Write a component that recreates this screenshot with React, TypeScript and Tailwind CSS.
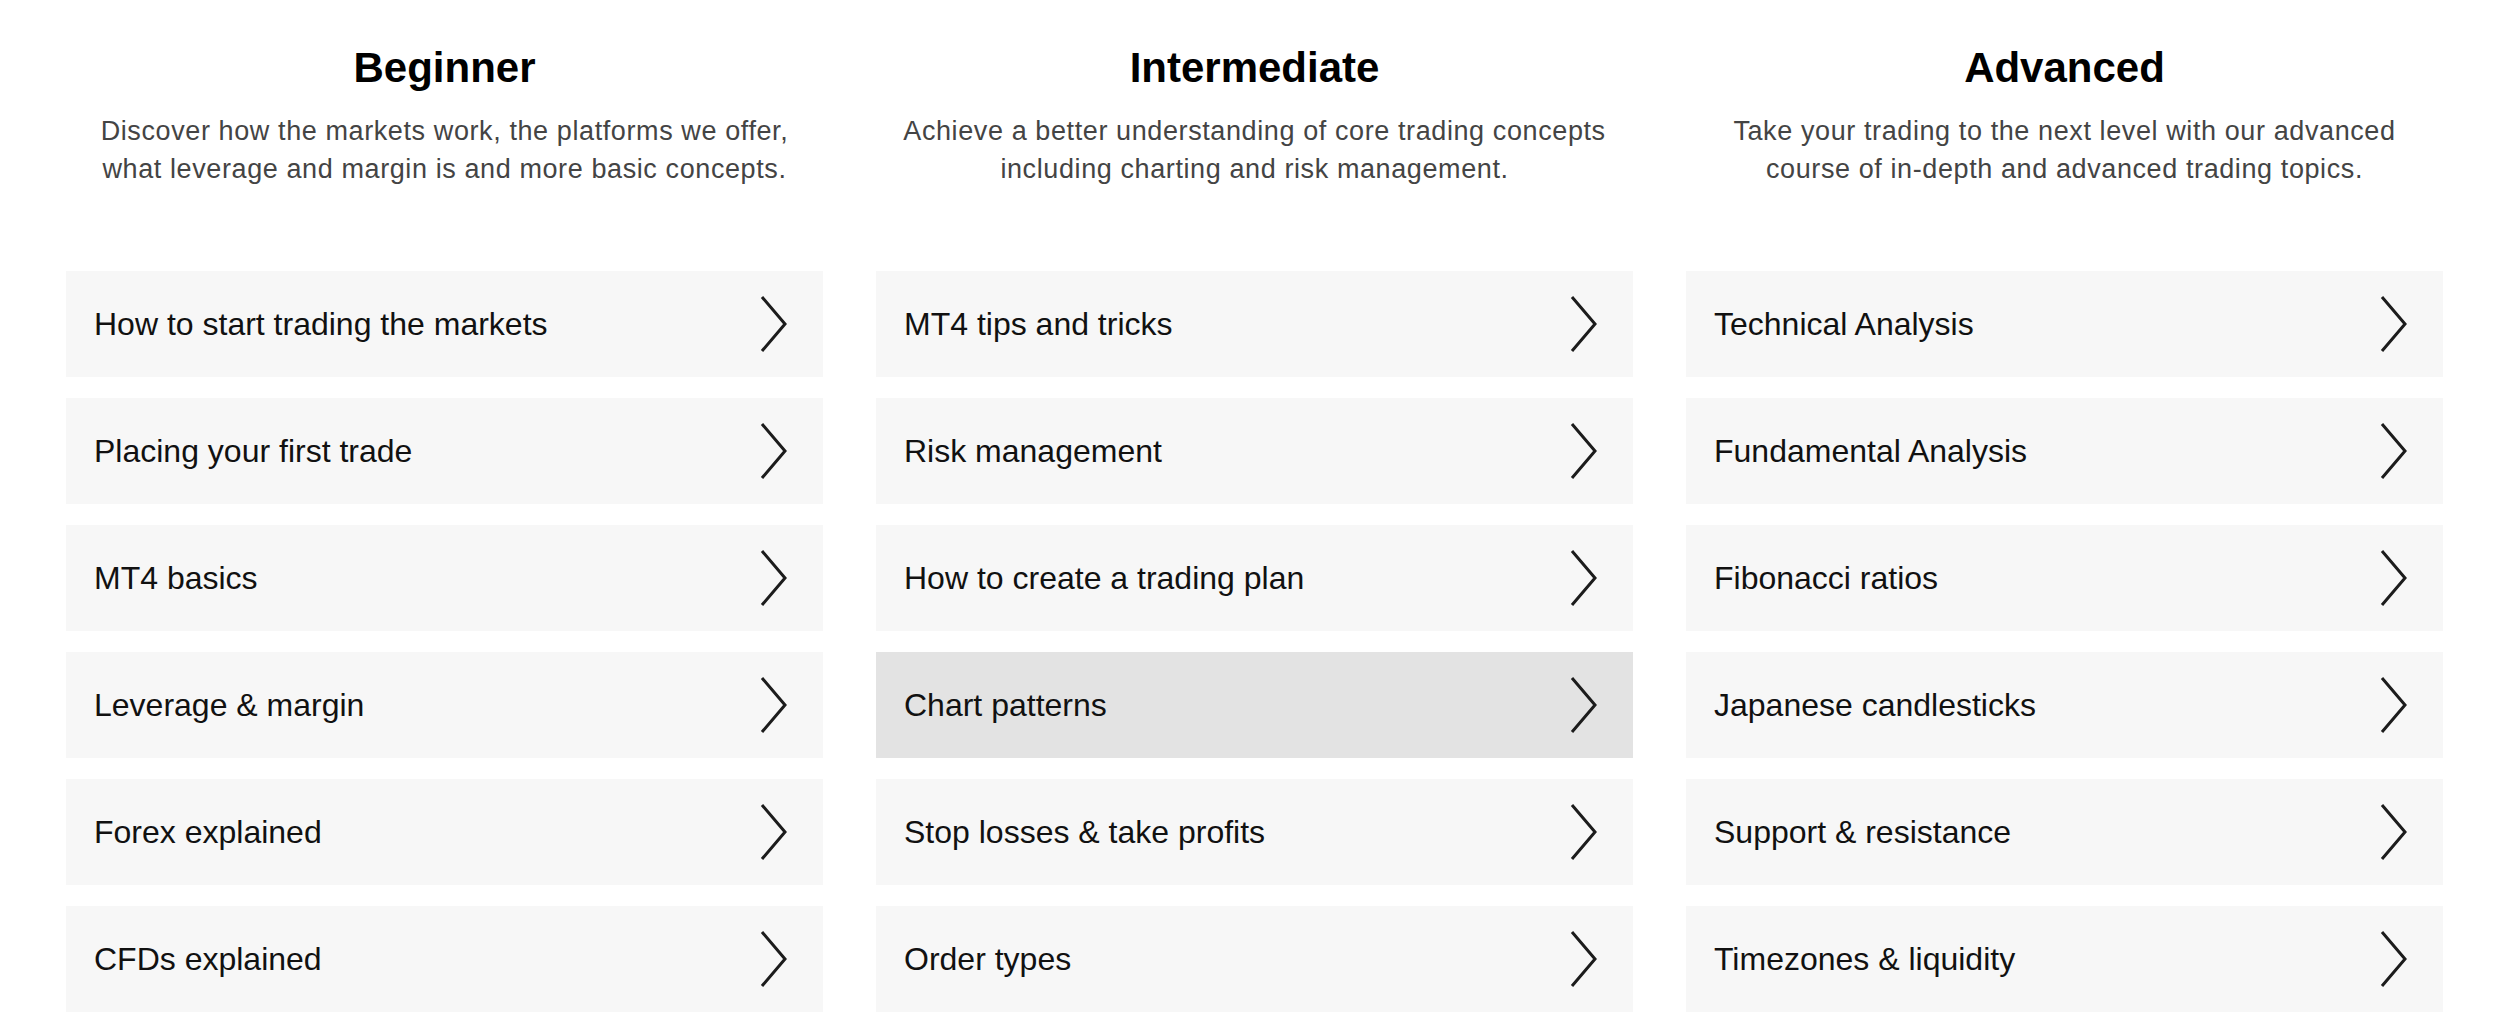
const levels = [
  {
    title: 'Beginner',
    lines: ['Discover how the markets work, the platforms we offer,', 'what leverage and margin is and more basic concepts.'],
    items: [
      'How to start trading the markets',
      'Placing your first trade',
      'MT4 basics',
      'Leverage & margin',
      'Forex explained',
      'CFDs explained',
    ],
  },
  {
    title: 'Intermediate',
    lines: ['Achieve a better understanding of core trading concepts', 'including charting and risk management.'],
    items: [
      'MT4 tips and tricks',
      'Risk management',
      'How to create a trading plan',
      'Chart patterns',
      'Stop losses & take profits',
      'Order types',
    ],
  },
  {
    title: 'Advanced',
    lines: ['Take your trading to the next level with our advanced', 'course of in-depth and advanced trading topics.'],
    items: [
      'Technical Analysis',
      'Fundamental Analysis',
      'Fibonacci ratios',
      'Japanese candlesticks',
      'Support & resistance',
      'Timezones & liquidity',
    ],
  },
];

function Chevron() {
  return (
    <svg width="28" height="58" viewBox="0 0 28 58" fill="none" className="shrink-0">
      <polyline points="3,2 26,29 3,56" stroke="#1c1c1c" strokeWidth="3" strokeLinejoin="miter" />
    </svg>
  );
}

export default function App() {
  const active = 'Chart patterns';

  return (
    <div className="min-h-screen bg-white font-['Liberation_Sans',Arial,sans-serif] text-[#111]">
      <div className="grid grid-cols-3 gap-x-[53px] pl-[66px] pr-[57px] pt-[43px]">
        {levels.map((level) => (
          <section key={level.title} className="flex flex-col">
            <h2 className="text-center text-[42px] font-bold leading-[50px] text-black">{level.title}</h2>
            <p className="mt-[19px] text-center text-[27px] leading-[38px] tracking-[0.6px] text-[#444]">
              {level.lines[0]}
              <br />
              {level.lines[1]}
            </p>
            <div className="mt-[83px] flex flex-col gap-[21px]">
              {level.items.map((item) => (
                <a
                  key={item}
                  href="#"
                  className={`flex h-[106px] items-center justify-between pl-[28px] pr-[36px] ${
                    item === active ? 'bg-[#e3e3e3]' : 'bg-[#f7f7f7]'
                  }`}
                >
                  <span className="text-[32px] leading-[36px] text-[#111]">{item}</span>
                  <Chevron />
                </a>
              ))}
            </div>
          </section>
        ))}
      </div>
    </div>
  );
}
